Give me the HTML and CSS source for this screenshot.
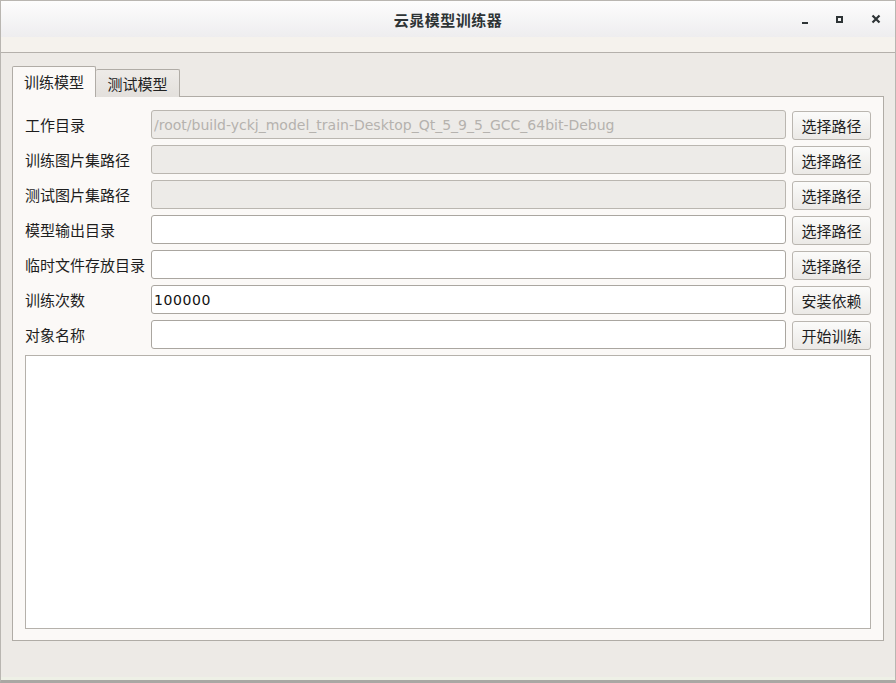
FILE: index.html
```html
<!DOCTYPE html>
<html lang="zh-CN">
<head>
  <meta charset="UTF-8" />
  <title>云晁模型训练器</title>
  <link rel="stylesheet" href="styles.css">
</head>
<body>
  <div class="window">

    <!-- TITLE BAR -->
    <header class="titlebar">
      <span class="title">云晁模型训练器</span>
      <div class="controls">
        <span class="ctl ctl-min"></span>
        <span class="ctl ctl-max"></span>
        <svg class="ctl-close" viewBox="0 0 10 10"><path d="M1.5 1.5 L8.5 8.5 M8.5 1.5 L1.5 8.5" /></svg>
      </div>
    </header>

    <!-- TOOLBAR -->
    <div class="toolbar">
      <span class="grip"></span>
    </div>

    <!-- MAIN -->
    <main class="central">
      <div class="tabs">
        <div class="tab active">训练模型</div>
        <div class="tab">测试模型</div>
      </div>
      <section class="pane">
        <div class="form">
          <label>工作目录</label>
          <input type="text" class="field disabled" value="/root/build-yckj_model_train-Desktop_Qt_5_9_5_GCC_64bit-Debug" disabled />
          <button>选择路径</button>

          <label>训练图片集路径</label>
          <input type="text" class="field disabled" disabled />
          <button>选择路径</button>

          <label>测试图片集路径</label>
          <input type="text" class="field disabled" disabled />
          <button>选择路径</button>

          <label>模型输出目录</label>
          <input type="text" class="field" />
          <button>选择路径</button>

          <label>临时文件存放目录</label>
          <input type="text" class="field" />
          <button>选择路径</button>

          <label>训练次数</label>
          <input type="text" class="field" value="100000" />
          <button>安装依赖</button>

          <label>对象名称</label>
          <input type="text" class="field" />
          <button>开始训练</button>
        </div>
        <textarea class="log"></textarea>
      </section>
    </main>

    <div class="statusbar"></div>
  </div>
</body>
</html>
```

FILE: styles.css
```css
/* RESET */
*, *::before, *::after {
  box-sizing: border-box;
  margin: 0;
  padding: 0;
}

body {
  font-family: "Noto Sans CJK SC", "DejaVu Sans", sans-serif;
  font-size: 15px;
  color: #1e1e1e;
  background: #9c9a96;
  width: 896px;
  height: 683px;
  overflow: hidden;
}

.window {
  width: 896px;
  height: 683px;
  display: flex;
  flex-direction: column;
  background: #edeae6;
  border: 1px solid #b9b6b1;
  border-bottom: 3px solid #a9a7a3;
}

/* TITLE BAR */
.titlebar {
  height: 36px;
  flex: none;
  position: relative;
  display: flex;
  justify-content: center;
  align-items: center;
  background: linear-gradient(#fdfdfd, #eeedef);
}

.title {
  font-weight: 700;
  font-size: 15px;
  color: #2e3436;
  letter-spacing: 0.5px;
}

.controls {
  position: absolute;
  right: 14px;
  top: 13px;
  display: flex;
  align-items: center;
  gap: 28px;
}

.ctl {
  display: block;
  width: 8px;
  height: 8px;
}

.ctl-min {
  border-bottom: 2px solid #2e3436;
  height: 6px;
  width: 6px;
  margin-top: 4px;
}

.ctl-max {
  border: 2px solid #2e3436;
  width: 7px;
  height: 7px;
}

.ctl-close {
  width: 10px;
  height: 10px;
  stroke: #2e3436;
  stroke-width: 2.2;
}

/* TOOLBAR */
.toolbar {
  height: 16px;
  flex: none;
  background: #f5f2ed;
  border-bottom: 1px solid #b4b0ab;
  display: flex;
  align-items: center;
  padding-left: 4px;
}

.grip {
  width: 6px;
  height: 6px;
  background-image: radial-gradient(#cfcac3 40%, transparent 45%);
  background-size: 2px 2px;
}

/* CENTRAL */
.central {
  flex: 1;
  padding: 13px 11px 0 11px;
  display: flex;
  flex-direction: column;
}

.tabs {
  display: flex;
  align-items: flex-end;
  height: 31px;
  position: relative;
  z-index: 1;
  margin-bottom: -1px;
}

.tab {
  height: 28px;
  width: 84px;
  border: 1px solid #b0aca6;
  border-bottom: none;
  background: linear-gradient(#eeebe8, #e3e0dc);
  display: flex;
  justify-content: center;
  align-items: center;
  color: #222;
  border-radius: 2px 2px 0 0;
}

.tab + .tab {
  border-left: none;
}

.tab.active {
  height: 31px;
  width: 84px;
  background: #fbf9f7;
  padding-bottom: 2px;
}

.pane {
  height: 545px;
  background: #fbf9f7;
  border: 1px solid #b0aca6;
  padding: 13px 12px 11px 12px;
  display: flex;
  flex-direction: column;
  gap: 6px;
}

.form {
  display: grid;
  grid-template-columns: 120px 1fr 79px;
  grid-auto-rows: 29px;
  row-gap: 6px;
  column-gap: 6px;
  align-items: center;
}

.form label {
  color: #1e1e1e;
}

.field {
  height: 29px;
  border: 1px solid #aaa6a0;
  border-radius: 3px;
  background: #fff;
  font-family: "DejaVu Sans", sans-serif;
  font-size: 14px;
  padding: 0 2px;
  color: #111;
  letter-spacing: 0.6px;
  outline: none;
}

.field.disabled {
  background: #edebe8;
  color: #b5b2ae;
  border-color: #bab6b0;
  letter-spacing: 0;
}

.form button {
  height: 29px;
  margin-top: 1px;
  font-family: inherit;
  font-size: 15px;
  color: #1e1e1e;
  border: 1px solid #bab6b0;
  border-radius: 3px;
  background: linear-gradient(#fbfbfa, #ebe9e6);
}

.log {
  flex: 1;
  border: 1px solid #b5b1ab;
  background: #fff;
  resize: none;
  outline: none;
}

.statusbar {
  height: 36px;
  flex: none;
  border-bottom: 3px solid #eef0e6;
}
```
